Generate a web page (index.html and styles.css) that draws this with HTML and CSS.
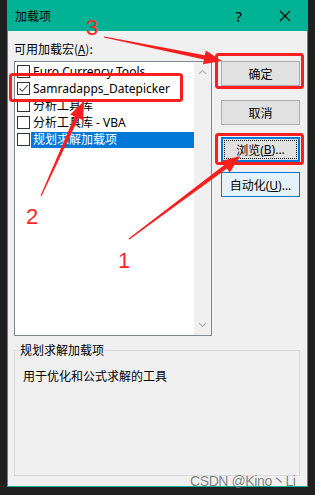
FILE: index.html
```html
<!DOCTYPE html>
<html lang="zh-CN">
<head>
  <meta charset="UTF-8" />
  <title>加载项</title>
  <link rel="stylesheet" href="styles.css">
</head>
<body>

  <div class="window">
    <div class="titlebar">
      <span class="title">加载项</span>
      <span class="help">?</span>
      <svg class="close" width="12" height="12" viewBox="0 0 12 12">
        <path d="M1 1 L11 11 M11 1 L1 11" stroke="#000" stroke-width="1.1" fill="none"/>
      </svg>
    </div>

    <div class="body">
      <div class="top">
        <div class="left">
          <div class="label">可用加载宏(<u>A</u>):</div>
          <div class="listbox">
            <ul class="items">
              <li><span class="cb"></span><span class="txt">Euro Currency Tools</span></li>
              <li><span class="cb checked">
                <svg width="11" height="11" viewBox="0 0 11 11"><path d="M1.5 5.5 L4.2 8.3 L9.8 2.2" stroke="#555" stroke-width="1.1" fill="none"/></svg>
              </span><span class="txt">Samradapps_Datepicker</span></li>
              <li><span class="cb"></span><span class="txt">分析工具库</span></li>
              <li><span class="cb"></span><span class="txt">分析工具库 - VBA</span></li>
              <li class="selected"><span class="cb"></span><span class="txt">规划求解加载项</span></li>
            </ul>
            <div class="scrollbar">
              <svg width="9" height="6" viewBox="0 0 9 6"><path d="M1 5 L4.5 1.5 L8 5" stroke="#b4b4b4" stroke-width="1.2" fill="none"/></svg>
              <svg width="9" height="6" viewBox="0 0 9 6"><path d="M1 1 L4.5 4.5 L8 1" stroke="#b4b4b4" stroke-width="1.2" fill="none"/></svg>
            </div>
          </div>
        </div>

        <div class="buttons">
          <button class="btn btn-ok">确定</button>
          <button class="btn btn-cancel">取消</button>
          <button class="btn btn-browse"><span class="focus">浏览(<u>B</u>)...</span></button>
          <button class="btn btn-auto">自动化(<u>U</u>)...</button>
        </div>
      </div>

      <fieldset class="group">
        <legend>规划求解加载项</legend>
        <p class="desc">用于优化和公式求解的工具</p>
      </fieldset>
    </div>
  </div>

  <div class="watermark">CSDN @Kino丶Li</div>

  <!-- red annotations drawn over the dialog -->
  <svg class="marks" width="315" height="495" viewBox="0 0 315 495">
    <g fill="none" stroke="#fa1e1e" stroke-width="3">
      <rect x="10.5" y="74.5" width="171" height="26" rx="2"/>
      <rect x="216.5" y="54.5" width="86" height="33" rx="2"/>
      <rect x="216.5" y="134.5" width="86" height="29" rx="2"/>
    </g>
    <g fill="#fa1e1e">
      <polygon points="104.1,36.4 204.8,55.2 205.8,50.5 222,61 203.0,64.3 204.0,59.6 103.9,37.6"/>
      <polygon points="40.5,195.7 74.6,116.5 70.2,114.5 84,101 83.0,120.3 78.6,118.3 41.5,196.3"/>
      <polygon points="128.6,238.5 224.3,165.0 221.4,161.2 240,156 229.8,172.4 226.9,168.6 129.4,239.5"/>
    </g>
    <g class="num" fill="#ff2626">
      <text x="86" y="35">3</text>
      <text x="26" y="224">2</text>
      <text x="118" y="268">1</text>
    </g>
  </svg>

</body>
</html>
```

FILE: styles.css
```css
* {
  box-sizing: border-box;
}
html, body {
  margin: 0;
  padding: 0;
  background: #1f1f1f;
  font-family: "Noto Sans", "Noto Sans CJK SC", sans-serif;
  font-size: 12px;
  color: #000;
}
body {
  position: relative;
  width: 315px;
  height: 495px;
  overflow: hidden;
}
.window {
  margin-left: 7px;
  width: 301px;
  height: 487px;
  background: #f0f0f0;
  border: 1px solid #00b294;
  border-top: none;
  display: flex;
  flex-direction: column;
}
.titlebar {
  height: 31px;
  background: #00b294;
  display: flex;
  align-items: center;
  padding: 0 17px 0 8px;
  margin: 0 -1px;
}
.title {
  flex: 1;
  font-family: "Noto Sans CJK SC", sans-serif;
  font-size: 12px;
}
.help {
  font-family: "Noto Sans", sans-serif;
  font-size: 15px;
  margin-right: 37px;
}
.close {
  display: block;
}
.body {
  flex: 1;
  padding: 9px 7px 0 6px;
}
.top {
  display: flex;
  gap: 9px;
}
.left {
  width: 198px;
}
.label {
  font-family: "Noto Sans CJK SC", sans-serif;
  line-height: 17px;
  margin-bottom: 4px;
}
.listbox {
  height: 275px;
  background: #fff;
  border: 1px solid #82878f;
  display: flex;
}
.items {
  list-style: none;
  margin: 1px 0 0;
  padding: 0 0 0 2px;
  flex: 1;
}
.items li {
  height: 17px;
  display: flex;
  align-items: center;
}
.cb {
  width: 13px;
  height: 13px;
  border: 1px solid #333;
  background: #fff;
  display: flex;
  align-items: center;
  justify-content: center;
  flex: none;
}
.txt {
  flex: 1;
  height: 16px;
  line-height: 16px;
  padding-left: 2px;
  margin-left: 1px;
  white-space: nowrap;
}
.selected .txt {
  background: #0078d7;
  color: #fff;
}
.scrollbar {
  width: 17px;
  background: #f0f0f0;
  display: flex;
  flex-direction: column;
  justify-content: space-between;
  align-items: center;
  padding: 7px 0 7px;
}
.scrollbar svg {
  display: block;
}
.buttons {
  width: 79px;
  padding-top: 21px;
  display: flex;
  flex-direction: column;
}
.btn {
  height: 25px;
  font-family: "Noto Sans", "Noto Sans CJK SC", sans-serif;
  font-size: 12px;
  color: #000;
  background: #e1e1e1;
  border: 1px solid #adadad;
  padding: 0;
}
.btn-cancel {
  margin-top: 14px;
}
.btn-browse {
  margin-top: 12px;
  border: 2px solid #0078d7;
  padding: 1px;
}
.btn-browse .focus {
  display: flex;
  align-items: center;
  justify-content: center;
  height: 100%;
  border: 1px dotted #000;
}
.btn-auto {
  margin-top: 10px;
  background: #e5f1fb;
  border-color: #0078d7;
}
.group {
  margin: 6px 0 0;
  padding: 0 5px 0 5px;
  height: 134px;
  border: 1px solid #dcdcdc;
}
.group legend {
  padding: 0;
  font-family: "Noto Sans CJK SC", sans-serif;
  line-height: 16px;
}
.desc {
  margin: 9px 0 0 3px;
  font-family: "Noto Sans CJK SC", sans-serif;
}
.watermark {
  position: absolute;
  left: 190px;
  top: 470px;
  font-family: "Liberation Sans", "Noto Sans CJK SC", sans-serif;
  font-size: 14px;
  letter-spacing: -0.4px;
  color: rgba(110, 110, 110, 0.85);
  white-space: nowrap;
}
.marks {
  position: absolute;
  left: 0;
  top: 0;
  pointer-events: none;
}
.num text {
  font-family: "Liberation Sans", sans-serif;
  font-size: 22px;
}
```
